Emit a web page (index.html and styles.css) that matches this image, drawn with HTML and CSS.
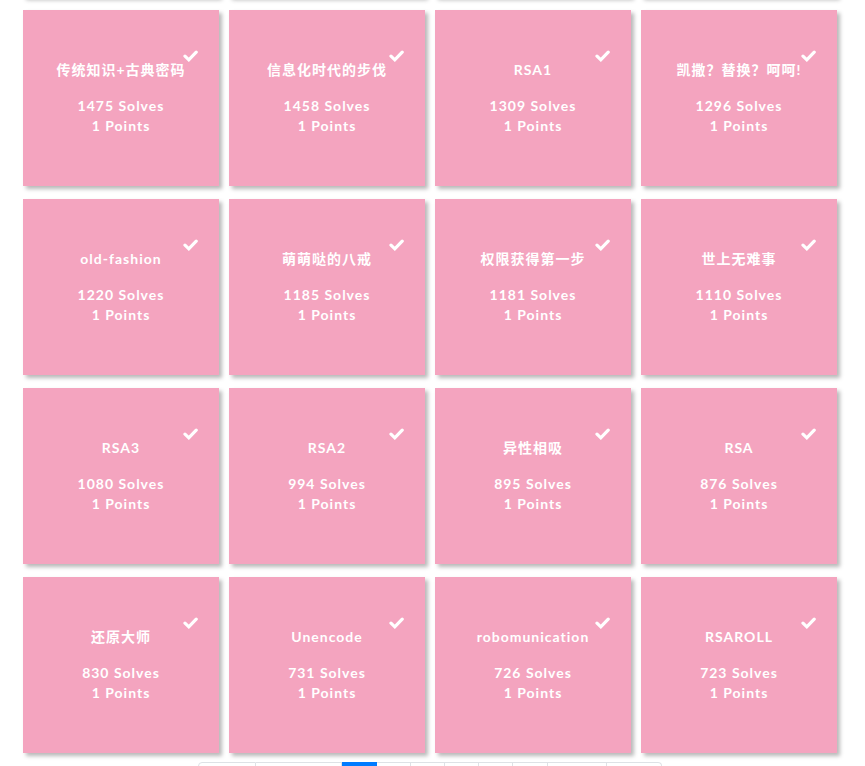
FILE: index.html
```html
<!DOCTYPE html>
<html>
<head>
<meta charset="utf-8">
<link rel="stylesheet" href="styles.css">
</head>
<body>
<div class="page">
  <div class="grid">
    <div class="edge"></div><div class="edge"></div><div class="edge"></div><div class="edge"></div>

    <div class="card"><svg class="check" viewBox="0 0 15 12"><polyline points="2,6.2 5.8,9.8 13.2,2.2"/></svg><div class="title">传统知识+古典密码</div><div class="meta">1475 Solves</div><div class="meta">1 Points</div></div>
    <div class="card"><svg class="check" viewBox="0 0 15 12"><polyline points="2,6.2 5.8,9.8 13.2,2.2"/></svg><div class="title">信息化时代的步伐</div><div class="meta">1458 Solves</div><div class="meta">1 Points</div></div>
    <div class="card"><svg class="check" viewBox="0 0 15 12"><polyline points="2,6.2 5.8,9.8 13.2,2.2"/></svg><div class="title">RSA1</div><div class="meta">1309 Solves</div><div class="meta">1 Points</div></div>
    <div class="card"><svg class="check" viewBox="0 0 15 12"><polyline points="2,6.2 5.8,9.8 13.2,2.2"/></svg><div class="title">凯撒？替换？呵呵!</div><div class="meta">1296 Solves</div><div class="meta">1 Points</div></div>

    <div class="card"><svg class="check" viewBox="0 0 15 12"><polyline points="2,6.2 5.8,9.8 13.2,2.2"/></svg><div class="title">old-fashion</div><div class="meta">1220 Solves</div><div class="meta">1 Points</div></div>
    <div class="card"><svg class="check" viewBox="0 0 15 12"><polyline points="2,6.2 5.8,9.8 13.2,2.2"/></svg><div class="title">萌萌哒的八戒</div><div class="meta">1185 Solves</div><div class="meta">1 Points</div></div>
    <div class="card"><svg class="check" viewBox="0 0 15 12"><polyline points="2,6.2 5.8,9.8 13.2,2.2"/></svg><div class="title">权限获得第一步</div><div class="meta">1181 Solves</div><div class="meta">1 Points</div></div>
    <div class="card"><svg class="check" viewBox="0 0 15 12"><polyline points="2,6.2 5.8,9.8 13.2,2.2"/></svg><div class="title">世上无难事</div><div class="meta">1110 Solves</div><div class="meta">1 Points</div></div>

    <div class="card"><svg class="check" viewBox="0 0 15 12"><polyline points="2,6.2 5.8,9.8 13.2,2.2"/></svg><div class="title">RSA3</div><div class="meta">1080 Solves</div><div class="meta">1 Points</div></div>
    <div class="card"><svg class="check" viewBox="0 0 15 12"><polyline points="2,6.2 5.8,9.8 13.2,2.2"/></svg><div class="title">RSA2</div><div class="meta">994 Solves</div><div class="meta">1 Points</div></div>
    <div class="card"><svg class="check" viewBox="0 0 15 12"><polyline points="2,6.2 5.8,9.8 13.2,2.2"/></svg><div class="title">异性相吸</div><div class="meta">895 Solves</div><div class="meta">1 Points</div></div>
    <div class="card"><svg class="check" viewBox="0 0 15 12"><polyline points="2,6.2 5.8,9.8 13.2,2.2"/></svg><div class="title">RSA</div><div class="meta">876 Solves</div><div class="meta">1 Points</div></div>

    <div class="card"><svg class="check" viewBox="0 0 15 12"><polyline points="2,6.2 5.8,9.8 13.2,2.2"/></svg><div class="title">还原大师</div><div class="meta">830 Solves</div><div class="meta">1 Points</div></div>
    <div class="card"><svg class="check" viewBox="0 0 15 12"><polyline points="2,6.2 5.8,9.8 13.2,2.2"/></svg><div class="title">Unencode</div><div class="meta">731 Solves</div><div class="meta">1 Points</div></div>
    <div class="card"><svg class="check" viewBox="0 0 15 12"><polyline points="2,6.2 5.8,9.8 13.2,2.2"/></svg><div class="title">robomunication</div><div class="meta">726 Solves</div><div class="meta">1 Points</div></div>
    <div class="card"><svg class="check" viewBox="0 0 15 12"><polyline points="2,6.2 5.8,9.8 13.2,2.2"/></svg><div class="title">RSAROLL</div><div class="meta">723 Solves</div><div class="meta">1 Points</div></div>
  </div>

  <div class="pager">
    <span class="pg w58">«</span>
    <span class="pg w86">‹</span>
    <span class="pg w35 active">1</span>
    <span class="pg w34">2</span>
    <span class="pg w34">3</span>
    <span class="pg w34">4</span>
    <span class="pg w34">5</span>
    <span class="pg w35">6</span>
    <span class="pg w59">›</span>
    <span class="pg w55">»</span>
  </div>
</div>
</body>
</html>
```
FILE: styles.css
```css
html, body {
  margin: 0;
  padding: 0;
  background: #ffffff;
  overflow: hidden;
}
.page {
  width: 865px;
  height: 766px;
  overflow: hidden;
  font-family: Lato, "Noto Sans CJK SC", sans-serif;
}
.grid {
  display: grid;
  grid-template-columns: repeat(4, 196px);
  column-gap: 10px;
  row-gap: 13px;
  padding-left: 23px;
  margin-top: -13px;
}
.edge {
  height: 10px;
  background: #f4a4bf;
  box-shadow: 3px 3px 4px rgba(0, 0, 0, 0.28);
}
.card {
  position: relative;
  height: 176px;
  box-sizing: border-box;
  padding-top: 50px;
  background: #f4a4bf;
  box-shadow: 3px 3px 4px rgba(0, 0, 0, 0.28);
  color: #ffffff;
  text-align: center;
  font-weight: 700;
  font-size: 14px;
  line-height: 20px;
  letter-spacing: 1px;
}
.title {
  margin-bottom: 16px;
}
.check {
  position: absolute;
  top: 40px;
  right: 21px;
  width: 15px;
  height: 12px;
  fill: none;
  stroke: #ffffff;
  stroke-width: 3.2;
  stroke-linecap: round;
  stroke-linejoin: miter;
}
.pager {
  display: flex;
  margin-top: 9px;
  margin-left: 198px;
  height: 38px;
}
.pg {
  box-sizing: border-box;
  height: 38px;
  border: 1px solid #dee2e6;
  border-left: none;
  color: #007bff;
  font-size: 14px;
  text-align: center;
  line-height: 36px;
}
.pg:first-child {
  border-left: 1px solid #dee2e6;
  border-radius: 4px 0 0 4px;
}
.pg:last-child {
  border-radius: 0 4px 4px 0;
}
.pg.active {
  background: #007bff;
  border-color: #007bff;
  color: #fff;
}
.w58 { width: 58px; }
.w86 { width: 86px; }
.w35 { width: 35px; }
.w34 { width: 34px; }
.w59 { width: 59px; }
.w55 { width: 55px; }
```
